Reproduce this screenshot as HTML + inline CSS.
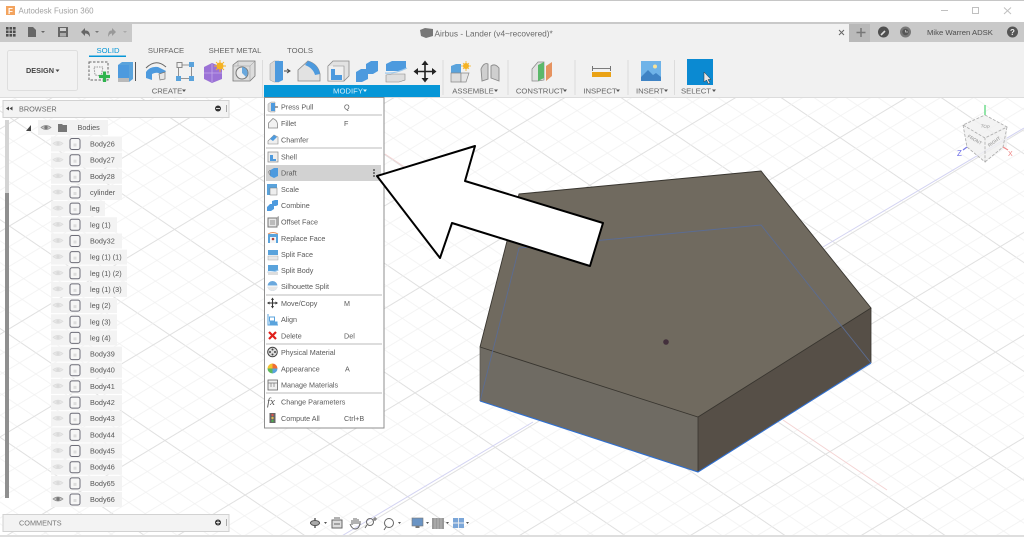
<!DOCTYPE html>
<html><head><meta charset="utf-8"><title>Autodesk Fusion 360</title>
<style>
html,body{margin:0;padding:0;background:#fff;width:1024px;height:537px;overflow:hidden}
svg{display:block;filter:blur(.35px)}
text{font-family:"Liberation Sans",sans-serif;font-size:7.3px;fill:#555}
.t{font-size:7.7px;fill:#666}
.m{font-size:7.2px;fill:#5a5a5a}
.c{text-anchor:middle}
</style></head><body>
<svg width="1024" height="537" viewBox="0 0 1024 537" xmlns="http://www.w3.org/2000/svg">
<defs>
<pattern id="g1" patternUnits="userSpaceOnUse" width="400" height="90" patternTransform="translate(840,137) rotate(34.2)">
<path d="M0 18H400M0 36H400M0 54H400M0 72H400" stroke="#f1f1f1" stroke-width=".8"/>
<path d="M0 .5H400" stroke="#e0e0e0" stroke-width="1"/>
</pattern>
<pattern id="g2" patternUnits="userSpaceOnUse" width="400" height="88" patternTransform="translate(840,137) rotate(-31)">
<path d="M0 18H400M0 35H400M0 53H400M0 70H400" stroke="#f1f1f1" stroke-width=".8"/>
<path d="M0 .5H400" stroke="#e0e0e0" stroke-width="1"/>
</pattern>
<g id="eye"><path d="M-5 0Q0-4 5 0Q0 4-5 0Z" fill="#e6e6e6" stroke="#dcdcdc" stroke-width=".7"/><circle r="1.6" fill="#dadada"/></g>
<g id="eyeon"><path d="M-5 0Q0-4 5 0Q0 4-5 0Z" fill="#c4c4c4" stroke="#8c8c8c" stroke-width=".8"/><circle r="1.7" fill="#777"/></g>
<g id="box"><rect x="-5" y="-5.5" width="10" height="11" rx="2" fill="#f6f6f6" stroke="#6d6d78" stroke-width="1"/><rect x="-1.5" y="-.5" width="3" height="3" fill="#dcdcdc"/></g>
</defs>

<!-- viewport -->
<rect width="1024" height="537" fill="#fff"/>
<rect y="97" width="1024" height="440" fill="url(#g1)"/>
<rect y="97" width="1024" height="440" fill="url(#g2)"/>
<path d="M1024 128L823 247M533 422L340 537" stroke="#d3d3f2" stroke-width="1"/>
<path d="M783 420L887 490M385 154L460 204" stroke="#f4d4d4" stroke-width="1"/>

<!-- solid -->
<path d="M519 194L761 171L871 308L698 417L480 347Z" fill="#706a5f"/>
<path d="M480 347L698 417V472L480 401Z" fill="#6f6b63"/>
<path d="M698 417L871 308V363L698 472Z" fill="#564f47"/>
<path d="M519 194L761 171L871 308L698 417L480 347Z" fill="none" stroke="#38352f" stroke-width=".9"/>
<path d="M698 417V472M871 308V363" stroke="#38352f" stroke-width=".8"/>
<path d="M480 347V401" stroke="#55524c" stroke-width=".7"/>
<path d="M480 401L519 248L761 225L871 363" fill="none" stroke="#5b6c93" stroke-width=".9"/>
<path d="M480 401L698 472L871 363" fill="none" stroke="#2f6fd0" stroke-width="1.100"/>
<circle cx="666" cy="342" r="2.800" fill="#43303c"/>

<!-- view cube -->
<g>
<path d="M985 115L1007 127V147L985 162L967 147L963 125Z" fill="#f0f0f0" opacity=".8"/>
<path d="M985 115L1007 127L985 138L963 125ZM963 125L967 147L985 162V138M1007 127L1003 147L985 162" fill="none" stroke="#aaa" stroke-width=".8" stroke-dasharray="3 1.500"/>
<path d="M985 115V105" stroke="#6fdc8c" stroke-width="1.500"/>
<path d="M967 147L963 150" stroke="#7a7ae8" stroke-width="1.200"/>
<text x="957" y="156" style="font-size:8px;fill:#6a6ae8">Z</text>
<path d="M1003 147L1008 150" stroke="#f08a8a" stroke-width="1.200"/>
<text x="1008" y="156" style="font-size:7px;fill:#ee8080">X</text>
<text transform="translate(985 128) rotate(10)" class="c" style="font-size:4.500px;fill:#999">TOP</text>
<text transform="translate(974 141) rotate(30)" class="c" style="font-size:4.500px;fill:#888">FRONT</text>
<text transform="translate(995 143) rotate(-35)" class="c" style="font-size:4.500px;fill:#888">RIGHT</text>
</g>

<!-- title bar -->
<rect width="1024" height="22" fill="#fff"/>
<rect width="1024" height="1" fill="#c6c6c6"/>
<rect x="6" y="6" width="9" height="9" fill="#f3a45f"/>
<text x="8" y="14" style="font-size:8px;font-weight:bold;fill:#fff">F</text>
<text x="18.500" y="13.500" style="font-size:7.900px;fill:#a2a2a2;letter-spacing:.05px">Autodesk Fusion 360</text>
<path d="M941 10.500H948" stroke="#c0c0c0"/>
<rect x="972.500" y="7.500" width="6" height="6" fill="none" stroke="#c0c0c0"/>
<path d="M1004 7.500L1011 14M1011 7.500L1004 14" stroke="#c0c0c0"/>

<!-- tab bar -->
<rect y="22" width="1024" height="20" fill="#c9c9c9"/>
<rect x="132" y="24" width="717" height="18" fill="#f1f1f1"/>
<rect x="849" y="24" width="21" height="18" fill="#b9b9b9"/>
<rect x="6" y="27" width="2.600" height="2.600" fill="#4d4d4d"/><rect x="9.500" y="27" width="2.600" height="2.600" fill="#4d4d4d"/><rect x="13" y="27" width="2.600" height="2.600" fill="#4d4d4d"/>
<rect x="6" y="30.500" width="2.600" height="2.600" fill="#4d4d4d"/><rect x="9.500" y="30.500" width="2.600" height="2.600" fill="#4d4d4d"/><rect x="13" y="30.500" width="2.600" height="2.600" fill="#4d4d4d"/>
<rect x="6" y="34" width="2.600" height="2.600" fill="#4d4d4d"/><rect x="9.500" y="34" width="2.600" height="2.600" fill="#4d4d4d"/><rect x="13" y="34" width="2.600" height="2.600" fill="#4d4d4d"/>
<path d="M28 27H33L36 30V37H28Z" fill="#666"/><path d="M41 31H45L43 33Z" fill="#666"/>
<path d="M58 27H68V37H58Z" fill="#666"/><rect x="60" y="28" width="6" height="3" fill="#d0d0d0"/><rect x="60" y="33" width="6" height="3.500" fill="#aaa"/>
<path d="M81 32L85 28V30.500Q90 30 90 37Q88 33 85 33.500V36Z" fill="#666"/><path d="M95 31H99L97 33Z" fill="#777"/>
<path d="M116 32L112 28V30.500Q108 30 108 37Q110 33 112 33.500V36Z" fill="#999"/><path d="M123 31H127L125 33Z" fill="#aaa"/>
<path d="M420 30L425 28L433 29V36L426 38L421 36Z" fill="#777"/>
<text x="434.500" y="36.500" class="t" style="font-size:8.300px;fill:#6a6a6a">Airbus - Lander (v4~recovered)*</text>
<path d="M839 30L844 35M844 30L839 35" stroke="#666" stroke-width="1"/>
<path d="M861 28V37M856.500 32.500H865.500" stroke="#777" stroke-width="1.500"/>
<circle cx="883.500" cy="32" r="5.500" fill="#4f4f4f"/><path d="M881 35L885 31" stroke="#ddd" stroke-width="1.600"/>
<circle cx="905.500" cy="32" r="5.500" fill="#777"/><circle cx="905.500" cy="32" r="3.200" fill="#555"/><path d="M905.500 30V32H908" stroke="#ccc" stroke-width=".8" fill="none"/>
<text x="927" y="35" style="font-size:7.700px;fill:#4d4d4d">Mike Warren ADSK</text>
<circle cx="1012.500" cy="32" r="5.500" fill="#555"/><text x="1012.500" y="35" class="c" style="font-size:8px;font-weight:bold;fill:#eee">?</text>

<!-- toolbar -->
<rect y="42" width="1024" height="55" fill="#f1f1f1"/>
<rect y="97" width="1024" height="1" fill="#dcdcdc"/>
<rect x="7.500" y="50.500" width="70" height="40" rx="2" fill="#f2f2f2" stroke="#dedede"/>
<text x="26" y="73" style="font-size:7.300px;font-weight:bold;fill:#444">DESIGN</text><path d="M55.500 69.500H59.500L57.500 72Z" fill="#444"/>
<rect x="89" y="55.500" width="37" height="1.500" fill="#0696d7"/>
<text x="108" y="53" class="t c" style="fill:#0696d7">SOLID</text>
<text x="166" y="53" class="t c">SURFACE</text>
<text x="235" y="53" class="t c">SHEET METAL</text>
<text x="300" y="53" class="t c">TOOLS</text>

<!-- create icons -->
<rect x="89" y="62" width="19" height="18" fill="#f4f4f4" stroke="#666" stroke-dasharray="2.500 1.500"/>
<path d="M94 67H103L101 76L95 75Z" fill="none" stroke="#999" stroke-dasharray="1.500 1"/>
<path d="M104.500 71.500V82M99 76.500H110" stroke="#2eb34d" stroke-width="3.200"/>
<path d="M118 65L122 62H133V79L129 82H118Z" fill="#5aa3dc"/><path d="M118 65H129V82H118Z" fill="#4d9ade"/><path d="M118 78H129V82H118Z" fill="#b9b9b9"/>
<path d="M135.500 62V81" stroke="#555"/>
<path d="M146 68Q156 58 166 67" fill="none" stroke="#666"/>
<path d="M146 72Q150 66 158 67L166 71L163 75Q157 71 152 74L152 80L146 78Z" fill="#4d9ade"/><path d="M159 74L165 72V79L160 80Z" fill="#e6e6e6" stroke="#777" stroke-width=".7"/>
<rect x="177" y="62.500" width="5" height="5" fill="#f0f0f0" stroke="#888"/><rect x="189" y="62" width="5" height="5" fill="#5aa3dc"/><rect x="176" y="76" width="5" height="5" fill="#5aa3dc"/><rect x="189" y="76" width="5" height="5" fill="#5aa3dc"/>
<path d="M182 65H189M178.500 68V76M181 78.500H189M191.500 67V76" stroke="#777" stroke-width=".8"/>
<path d="M204 67L212 63L222 67V79L212 83L204 79Z" fill="#9b72d6"/><path d="M204 73H222M212 64V82" stroke="#c4a8ea" stroke-width=".8"/>
<circle cx="220" cy="66" r="3.500" fill="#f5b324"/><path d="M220 60V72M214 66H226M216 62L224 70M224 62L216 70" stroke="#f5b324" stroke-width=".9"/>
<path d="M233 65L238 61H255V76L250 81H233Z" fill="#dcdcdc" stroke="#777" stroke-width=".8"/><path d="M238 61V66H233M238 66H250V81M250 66L255 61" fill="none" stroke="#999" stroke-width=".5"/>
<circle cx="242" cy="73" r="6" fill="#eee" stroke="#777"/><path d="M242 73L242 67A6 6 0 0 1 246 77Z" fill="#6aa8dd"/>
<text x="167" y="93.500" class="t c">CREATE</text><path d="M182 89.500H186L184 92Z" fill="#555"/>
<path d="M262.500 60V97" stroke="#dcdcdc"/>

<!-- modify icons -->
<path d="M270 64L274 61H279V82H274L270 80Z" fill="#d8d8d8" stroke="#999" stroke-width=".5"/><path d="M275 61H283V80L279 82H275Z" fill="#4d9ade"/>
<path d="M284 71H289M287 69L290 71L287 73" stroke="#444" fill="none"/>
<path d="M298 70L308 61Q318 64 320 74V81H298Z" fill="#e2e2e2" stroke="#888" stroke-width=".8"/><path d="M308 61Q318 64 320 74L315 75Q313 68 305 65Z" fill="#4d9ade"/>
<path d="M328 66L333 61H349V76L344 81H328Z" fill="#e2e2e2" stroke="#888" stroke-width=".8"/><path d="M333 66H344V81H328V66" fill="#efefef" stroke="#888" stroke-width=".6"/><path d="M331 69H335V75H342V80H331Z" fill="#4d9ade"/>
<path d="M356 72L361 69H366V64L371 61H378V71L373 74H368V79L362 82H356Z" fill="#4d9ade"/>
<path d="M386 64L392 61H406V69L400 71H386Z" fill="#4d9ade"/><path d="M385 73Q395 74 407 68" stroke="#9cc8ec" stroke-width="1.200" fill="none"/>
<path d="M386 75L392 74H405V80L399 82H386Z" fill="#dedede" stroke="#888" stroke-width=".6"/>
<path d="M425 62V81M415 71.500H435" stroke="#222" stroke-width="1.600"/>
<path d="M425 60.500L421.500 65H428.500ZM425 82.500L421.500 78H428.500ZM413.500 71.500L418 68V75ZM436.500 71.500L432 68V75Z" fill="#222"/>
<rect x="264" y="85" width="176" height="12" fill="#0696d7"/>
<text x="348" y="93.500" class="t c" style="fill:#d6eefa">MODIFY</text><path d="M363 89.500H367L365 92Z" fill="#e6f5fb"/>
<path d="M443 60V95M508 60V95M575 60V95M628 60V95M674.500 60V95" stroke="#dcdcdc"/>

<!-- assemble etc -->
<path d="M451 66L456 64H461V73H451Z" fill="#5aa3dc"/><path d="M451 73H461V82H451Z" fill="#ddd" stroke="#888" stroke-width=".7"/><path d="M461 73H469L466 82H461Z" fill="#e6e6e6" stroke="#888" stroke-width=".7"/>
<circle cx="466" cy="66" r="3" fill="#f5b324"/><path d="M466 61V71M461 66H471M463 63L469 69M469 63L463 69" stroke="#f5b324" stroke-width=".8"/>
<path d="M481 69Q484 62 488 64L488 79L482 81ZM499 68Q495 63 491 66V78L499 81Z" fill="#cfcfcf" stroke="#8a8a8a" stroke-width=".9"/>
<path d="M532 69L538 62L544 62V80L538 81L532 81Z" fill="#e2e2e2" stroke="#888" stroke-width=".7"/><path d="M538 65L544 62V78L538 81Z" fill="#5cb86a"/>
<path d="M546 66L552 62V76L546 81Z" fill="#e69360"/>
<rect x="592" y="72" width="19" height="5" fill="#eaa215"/><path d="M593 68.500H610M592.500 66V71M610.500 66V71" stroke="#555" stroke-width=".8"/>
<rect x="641" y="61" width="20" height="20" fill="#6fb3e8"/><path d="M641 81L641 77L648 70L653 75L656 73L661 77V81Z" fill="#3f83c4"/><circle cx="655" cy="66.500" r="2" fill="#f7e29a"/>
<rect x="687" y="59" width="26" height="26" fill="#0b8ad2"/>
<path d="M704 72V82L706.500 80L708.500 84L710 83L708 79.500H711Z" fill="#e8e8e8" stroke="#333" stroke-width=".5"/>
<text x="473" y="93.500" class="t c">ASSEMBLE</text><path d="M494 89.500H498L496 92Z" fill="#555"/>
<text x="540" y="93.500" class="t c">CONSTRUCT</text><path d="M563 89.500H567L565 92Z" fill="#555"/>
<text x="600" y="93.500" class="t c">INSPECT</text><path d="M616 89.500H620L618 92Z" fill="#555"/>
<text x="650" y="93.500" class="t c">INSERT</text><path d="M664 89.500H668L666 92Z" fill="#555"/>
<text x="696" y="93.500" class="t c">SELECT</text><path d="M712 89.500H716L714 92Z" fill="#555"/>

<!-- browser -->
<rect x="3" y="100.500" width="226" height="17" fill="#f3f3f3" stroke="#d2d2d2"/>
<path d="M6 108.500L9 106.500V110.500ZM9.500 108.500L12.500 106.500V110.500Z" fill="#444"/>
<text x="19" y="111.500" style="font-size:7.300px;fill:#6a6a6a">BROWSER</text>
<circle cx="218" cy="108.500" r="3" fill="#333"/><path d="M216 108.500H220" stroke="#fff" stroke-width=".8"/>
<path d="M226.500 105V112" stroke="#aaa"/>
<rect x="5" y="120" width="4" height="73" fill="#d4d4d4"/><rect x="5" y="193" width="4" height="305" fill="#8f8f8f"/>

<path d="M26 131L31 125V131Z" fill="#444"/>
<rect x="38" y="120" width="70" height="15" fill="#f2f2f2"/>
<use href="#eyeon" x="46" y="127.500"/>
<path d="M58 124H62L63 125H67V132H58Z" fill="#777"/>
<text x="77.500" y="130">Bodies</text>

<g>
<rect x="51" y="136.500" width="71" height="15" fill="#f3f3f3"/><use href="#eye" x="58" y="143.500"/><use href="#box" x="75" y="144"/><text x="90" y="146.500">Body26</text>
<rect x="51" y="152.700" width="71" height="15" fill="#f3f3f3"/><use href="#eye" x="58" y="159.700"/><use href="#box" x="75" y="160.200"/><text x="90" y="162.700">Body27</text>
<rect x="51" y="168.800" width="71" height="15" fill="#f3f3f3"/><use href="#eye" x="58" y="175.800"/><use href="#box" x="75" y="176.300"/><text x="90" y="178.800">Body28</text>
<rect x="51" y="185" width="71" height="15" fill="#f3f3f3"/><use href="#eye" x="58" y="192"/><use href="#box" x="75" y="192.500"/><text x="90" y="195">cylinder</text>
<rect x="51" y="201.100" width="54" height="15" fill="#f3f3f3"/><use href="#eye" x="58" y="208.100"/><use href="#box" x="75" y="208.600"/><text x="90" y="211.100">leg</text>
<rect x="51" y="217.300" width="66" height="15" fill="#f3f3f3"/><use href="#eye" x="58" y="224.300"/><use href="#box" x="75" y="224.800"/><text x="90" y="227.300">leg (1)</text>
<rect x="51" y="233.500" width="71" height="15" fill="#f3f3f3"/><use href="#eye" x="58" y="240.500"/><use href="#box" x="75" y="241"/><text x="90" y="243.500">Body32</text>
<rect x="51" y="249.600" width="76" height="15" fill="#f3f3f3"/><use href="#eye" x="58" y="256.600"/><use href="#box" x="75" y="257.100"/><text x="90" y="259.600">leg (1) (1)</text>
<rect x="51" y="265.800" width="76" height="15" fill="#f3f3f3"/><use href="#eye" x="58" y="272.800"/><use href="#box" x="75" y="273.300"/><text x="90" y="275.800">leg (1) (2)</text>
<rect x="51" y="281.900" width="76" height="15" fill="#f3f3f3"/><use href="#eye" x="58" y="288.900"/><use href="#box" x="75" y="289.400"/><text x="90" y="291.900">leg (1) (3)</text>
<rect x="51" y="298.100" width="66" height="15" fill="#f3f3f3"/><use href="#eye" x="58" y="305.100"/><use href="#box" x="75" y="305.600"/><text x="90" y="308.100">leg (2)</text>
<rect x="51" y="314.300" width="66" height="15" fill="#f3f3f3"/><use href="#eye" x="58" y="321.300"/><use href="#box" x="75" y="321.800"/><text x="90" y="324.300">leg (3)</text>
<rect x="51" y="330.400" width="66" height="15" fill="#f3f3f3"/><use href="#eye" x="58" y="337.400"/><use href="#box" x="75" y="337.900"/><text x="90" y="340.400">leg (4)</text>
<rect x="51" y="346.600" width="71" height="15" fill="#f3f3f3"/><use href="#eye" x="58" y="353.600"/><use href="#box" x="75" y="354.100"/><text x="90" y="356.600">Body39</text>
<rect x="51" y="362.700" width="71" height="15" fill="#f3f3f3"/><use href="#eye" x="58" y="369.700"/><use href="#box" x="75" y="370.200"/><text x="90" y="372.700">Body40</text>
<rect x="51" y="378.900" width="71" height="15" fill="#f3f3f3"/><use href="#eye" x="58" y="385.900"/><use href="#box" x="75" y="386.400"/><text x="90" y="388.900">Body41</text>
<rect x="51" y="395.100" width="71" height="15" fill="#f3f3f3"/><use href="#eye" x="58" y="402.100"/><use href="#box" x="75" y="402.600"/><text x="90" y="405.100">Body42</text>
<rect x="51" y="411.200" width="71" height="15" fill="#f3f3f3"/><use href="#eye" x="58" y="418.200"/><use href="#box" x="75" y="418.700"/><text x="90" y="421.200">Body43</text>
<rect x="51" y="427.400" width="71" height="15" fill="#f3f3f3"/><use href="#eye" x="58" y="434.400"/><use href="#box" x="75" y="434.900"/><text x="90" y="437.400">Body44</text>
<rect x="51" y="443.500" width="71" height="15" fill="#f3f3f3"/><use href="#eye" x="58" y="450.500"/><use href="#box" x="75" y="451"/><text x="90" y="453.500">Body45</text>
<rect x="51" y="459.700" width="71" height="15" fill="#f3f3f3"/><use href="#eye" x="58" y="466.700"/><use href="#box" x="75" y="467.200"/><text x="90" y="469.700">Body46</text>
<rect x="51" y="475.900" width="71" height="15" fill="#f3f3f3"/><use href="#eye" x="58" y="482.900"/><use href="#box" x="75" y="483.400"/><text x="90" y="485.900">Body65</text>
<rect x="51" y="492" width="71" height="15" fill="#f3f3f3"/><use href="#eyeon" x="58" y="499"/><use href="#box" x="75" y="499.500"/><text x="90" y="502">Body66</text>
</g>

<!-- comments -->
<rect x="3" y="514.500" width="226" height="17" fill="#f3f3f3" stroke="#d2d2d2"/>
<text x="19" y="525.500" style="font-size:7.300px;fill:#777">COMMENTS</text>
<circle cx="218" cy="522.500" r="3" fill="#333"/><path d="M216 522.500H220M218 520.500V524.500" stroke="#fff" stroke-width=".8"/>
<path d="M226.500 519V526" stroke="#aaa"/>
<rect y="535" width="1024" height="2" fill="#dedede"/>

<!-- bottom nav -->
<g fill="none" stroke="#666" stroke-width="1">
<path d="M315 518V528M310 523H320" stroke="#555" stroke-width="1.400"/><ellipse cx="315" cy="523" rx="4.500" ry="2.500" fill="#aaa" stroke="#555"/>
<rect x="332" y="520" width="10" height="8" fill="#ddd"/><path d="M334 518H340M334 524H340"/>
<path d="M352 525V520M354 524V518M356 524V518M358 524V519M360 525V521Q360 529 355 529Q352 529 350 524"/>
<circle cx="370" cy="522" r="3.500"/><path d="M367 525L365 528M375 517V521M373 519H377"/>
<circle cx="389" cy="523" r="4.500"/><path d="M386 527L384 530"/>
</g>
<path d="M324 522H327L325.500 524ZM398 522H401L399.500 524ZM426 522H429L427.500 524ZM446 522H449L447.500 524ZM466 522H469L467.500 524Z" fill="#555"/>
<rect x="412" y="518" width="11" height="8" fill="#6a94c4" stroke="#777" stroke-width=".6"/><rect x="415.500" y="526" width="4" height="2" fill="#777"/>
<rect x="432" y="518" width="12" height="11" fill="#999"/><path d="M435 518V529M438 518V529M441 518V529" stroke="#ccc" stroke-width=".6"/>
<rect x="453" y="518" width="11" height="10" fill="#7ba6d8"/><path d="M458.500 518V528M453 523H464" stroke="#f0f0f0" stroke-width=".9"/>

<!-- menu -->
<rect x="264.500" y="97.500" width="119.500" height="330.500" fill="#fff" stroke="#8f8f8f"/>
<rect x="266" y="165" width="115" height="16" fill="#d2d2d2"/>
<path d="M266 115H382M266 148H382M266 295H382M266 344H382M266 393H382" stroke="#bbb" stroke-width="1"/>
<circle cx="374" cy="170" r=".9" fill="#333"/><circle cx="374" cy="173" r=".9" fill="#333"/><circle cx="374" cy="176" r=".9" fill="#333"/>

<path d="M268 104L271 102H275V112L270 112L268 111Z" fill="#ddd" stroke="#888" stroke-width=".4"/><path d="M271 103H275V111H271Z" fill="#4d9ade"/><path d="M275 107H278" stroke="#444"/>
<path d="M268.500 123L273 118.500Q277 120 277.500 124V128H268.500Z" fill="#f2f2f2" stroke="#888" stroke-width=".8"/>
<path d="M268 141L274 135L278 137V144H268Z" fill="#efefef" stroke="#888" stroke-width=".6"/><path d="M270 139L274 135L277 137L273 141Z" fill="#4d9ade"/>
<rect x="268" y="152" width="10" height="10" fill="#eee" stroke="#888" stroke-width=".7"/><path d="M270 155H273V159H276V161H270Z" fill="#4d9ade"/>
<path d="M269 171L274 168H278V176L274 178L270 176Z" fill="#4d9ade"/><path d="M268 172L270 170V175Z" fill="#ccc" stroke="#666" stroke-width=".4"/>
<rect x="267" y="184" width="10" height="11" fill="#5aa3dc"/><rect x="270" y="188" width="7" height="7" fill="#eee" stroke="#777" stroke-width=".5"/>
<path d="M267 207L270 204H272V201L275 200H278V205L276 206H274V209L271 211H267Z" fill="#4d9ade"/>
<rect x="268" y="218" width="9" height="9" fill="#e6e6e6" stroke="#777" stroke-width="1"/><rect x="270" y="220" width="5" height="5" fill="#bbb"/><path d="M277 217L279 216V225L277 227Z" fill="#aaa"/>
<rect x="268" y="234" width="10" height="9" fill="#5aa3dc"/><rect x="270" y="237" width="6" height="6" fill="#f4f4f4"/><path d="M268 234Q273 231 278 234" stroke="#e69360" fill="none"/><circle cx="273" cy="239" r="1.300" fill="#b2433d"/>
<rect x="268" y="250" width="10" height="5" fill="#5aa3dc"/><rect x="268" y="256" width="10" height="4" fill="#e8e8e8" stroke="#999" stroke-width=".4"/>
<rect x="268" y="265" width="10" height="6" fill="#5aa3dc"/><path d="M267.500 272Q273 273 278.500 270" stroke="#9cc8ec" fill="none"/><rect x="268" y="272" width="10" height="3" fill="#ddd"/>
<circle cx="272.500" cy="286" r="5" fill="#6aa8dd"/><path d="M267.500 286A5 5 0 0 0 277.500 286Z" fill="#e6e6e6"/><path d="M267 286H278" stroke="#fff"/>
<path d="M272.500 298.500V307.500M268 303H277" stroke="#333" stroke-width="1.100"/><path d="M272.500 297.500L271 300H274ZM272.500 308.500L271 306H274ZM267 303L269.500 301.500V304.500ZM278 303L275.500 301.500V304.500Z" fill="#333"/>
<path d="M268 314V325H278" stroke="#5aa3dc" fill="none"/><rect x="269.500" y="317" width="5" height="4" fill="#fff" stroke="#5aa3dc"/><rect x="269.500" y="321.500" width="8" height="3" fill="#5aa3dc"/>
<path d="M269 332L276 339M276 332L269 339" stroke="#e0201b" stroke-width="2.200"/>
<circle cx="272.500" cy="352" r="4.800" fill="#ddd" stroke="#444" stroke-width="1"/><circle cx="272.500" cy="349.500" r="1" fill="#444"/><circle cx="272.500" cy="354.500" r="1" fill="#444"/><circle cx="270" cy="352" r="1" fill="#444"/><circle cx="275" cy="352" r="1" fill="#444"/>
<path d="M272.500 368.500V363.500A5 5 0 0 1 277.500 368.500Z" fill="#ef6d34"/><path d="M272.500 368.500H277.500A5 5 0 0 1 272.500 373.500Z" fill="#5aa3dc"/><path d="M272.500 368.500V373.500A5 5 0 0 1 267.500 368.500Z" fill="#5cb85c"/><path d="M272.500 368.500H267.500A5 5 0 0 1 272.500 363.500Z" fill="#f2c230"/>
<rect x="268" y="380" width="9.500" height="10" fill="#f0f0f0" stroke="#666" stroke-width=".8"/><path d="M268 383H277.500M271 383V387M274 383V387" stroke="#777" stroke-width=".7"/>
<text x="267" y="405" style="font-family:'Liberation Serif',serif;font-style:italic;font-size:11px;fill:#555">fx</text>
<rect x="269.500" y="413" width="6" height="10" fill="#666"/><circle cx="272.500" cy="415" r="1.200" fill="#d8544f"/><circle cx="272.500" cy="418" r="1.200" fill="#ddb84f"/><circle cx="272.500" cy="421" r="1.200" fill="#4caf50"/>

<text x="281" y="109.500" class="m">Press Pull</text><text x="344" y="109.500" class="m">Q</text>
<text x="281" y="126" class="m">Fillet</text><text x="344" y="126" class="m">F</text>
<text x="281" y="142.500" class="m">Chamfer</text>
<text x="281" y="159.500" class="m">Shell</text>
<text x="281" y="175.500" class="m">Draft</text>
<text x="281" y="192" class="m">Scale</text>
<text x="281" y="208" class="m">Combine</text>
<text x="281" y="224.500" class="m">Offset Face</text>
<text x="281" y="241" class="m">Replace Face</text>
<text x="281" y="257" class="m">Split Face</text>
<text x="281" y="273" class="m">Split Body</text>
<text x="281" y="289" class="m">Silhouette Split</text>
<text x="281" y="306" class="m">Move/Copy</text><text x="344" y="306" class="m">M</text>
<text x="281" y="322" class="m">Align</text>
<text x="281" y="338.500" class="m">Delete</text><text x="344" y="338.500" class="m">Del</text>
<text x="281" y="355" class="m">Physical Material</text>
<text x="281" y="371.500" class="m">Appearance</text><text x="345" y="371.500" class="m">A</text>
<text x="281" y="387.500" class="m">Manage Materials</text>
<text x="281" y="404.500" class="m">Change Parameters</text>
<text x="281" y="421" class="m">Compute All</text><text x="344" y="421" class="m">Ctrl+B</text>

<!-- arrow -->
<path d="M377 176L475 146L465 181L603 223L590 266L452 223L440 258Z" fill="#fff" stroke="#000" stroke-width="2" stroke-linejoin="round"/>
</svg>
</body></html>
